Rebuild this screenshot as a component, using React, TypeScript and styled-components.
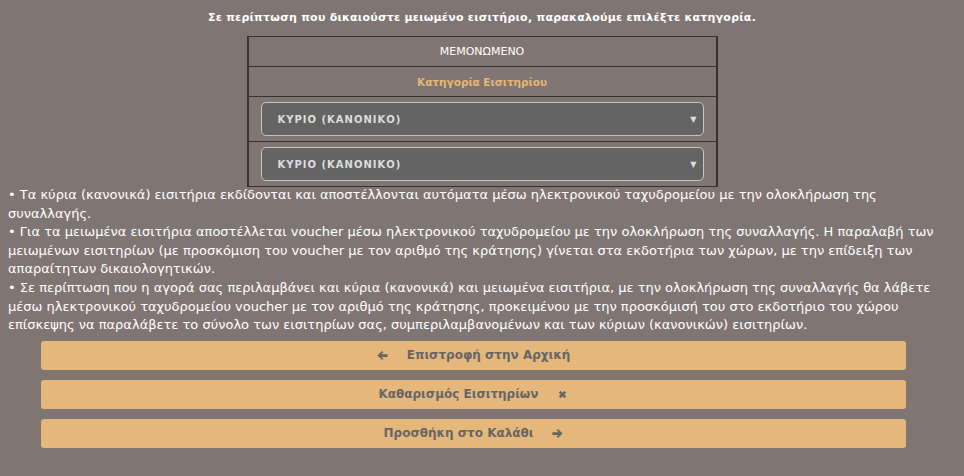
import React from 'react';
import styled, { createGlobalStyle } from 'styled-components';

const GlobalStyle = createGlobalStyle`
  html, body {
    margin: 0;
    padding: 0;
    background: #7f7674;
  }
  body {
    padding: 8px;
    font-family: 'DejaVu Sans', Verdana, sans-serif;
    color: #fff;
  }
`;

/** επιλογή μειωμένου εισιτηρίου */
const App = () => {
  return (
    <>
      <GlobalStyle />
      <Page>
        <Title>Σε περίπτωση που δικαιούστε μειωμένο εισιτήριο, παρακαλούμε επιλέξτε κατηγορία.</Title>
        <TicketTable>
          <tbody>
            <tr>
              <HeadCell>ΜΕΜΟΝΩΜΕΝΟ</HeadCell>
            </tr>
            <tr>
              <HeadCell $accent>Κατηγορία Εισιτηρίου</HeadCell>
            </tr>
            <tr>
              <SelectCell>
                <SelectBox>
                  <span>ΚΥΡΙΟ (ΚΑΝΟΝΙΚΟ)</span>
                  <Caret>▼</Caret>
                </SelectBox>
              </SelectCell>
            </tr>
            <tr>
              <SelectCell>
                <SelectBox>
                  <span>ΚΥΡΙΟ (ΚΑΝΟΝΙΚΟ)</span>
                  <Caret>▼</Caret>
                </SelectBox>
              </SelectCell>
            </tr>
          </tbody>
        </TicketTable>
        <Notes>
          <p>
            • Τα κύρια (κανονικά) εισιτήρια εκδίδονται και αποστέλλονται αυτόματα μέσω ηλεκτρονικού
            ταχυδρομείου με την ολοκλήρωση της συναλλαγής.
          </p>
          <p>
            • Για τα μειωμένα εισιτήρια αποστέλλεται voucher μέσω ηλεκτρονικού ταχυδρομείου με την
            ολοκλήρωση της συναλλαγής. Η παραλαβή των μειωμένων εισιτηρίων (με προσκόμιση του voucher
            με τον αριθμό της κράτησης) γίνεται στα εκδοτήρια των χώρων, με την επίδειξη των
            απαραίτητων δικαιολογητικών.
          </p>
          <p>
            • Σε περίπτωση που η αγορά σας περιλαμβάνει και κύρια (κανονικά) και μειωμένα εισιτήρια, με
            την ολοκλήρωση της συναλλαγής θα λάβετε μέσω ηλεκτρονικού ταχυδρομείου voucher με τον
            αριθμό της κράτησης, προκειμένου με την προσκόμισή του στο εκδοτήριο του χώρου επίσκεψης
            να παραλάβετε το σύνολο των εισιτηρίων σας, συμπεριλαμβανομένων και των κύριων
            (κανονικών) εισιτηρίων.
          </p>
        </Notes>
        <Actions>
          <ActionButton>
            <Icon viewBox='0 0 12 12'>
              <path d='M0.5 6 L5.5 1 L7 2.5 L4.8 4.5 H11.5 V7.5 H4.8 L7 9.5 L5.5 11 Z' />
            </Icon>
            Επιστροφή στην Αρχική
          </ActionButton>
          <ActionButton>
            Καθαρισμός Εισιτηρίων
            <Icon viewBox='0 0 12 12'>
              <path d='M2 4 L4 2 L6 4 L8 2 L10 4 L8 6 L10 8 L8 10 L6 8 L4 10 L2 8 L4 6 Z' />
            </Icon>
          </ActionButton>
          <ActionButton>
            Προσθήκη στο Καλάθι
            <Icon viewBox='0 0 12 12'>
              <path d='M11.5 6 L6.5 1 L5 2.5 L7.2 4.5 H0.5 V7.5 H7.2 L5 9.5 L6.5 11 Z' />
            </Icon>
          </ActionButton>
        </Actions>
      </Page>
    </>
  );
};
export default App;

const Page = styled.div`
  width: 948px;
  display: flex;
  flex-direction: column;
`;

const Title = styled.h3`
  margin: 3px 0 0;
  font-size: 11px;
  font-weight: bold;
  line-height: 14px;
  letter-spacing: 0.25px;
  text-align: center;
`;

const TicketTable = styled.table`
  width: 471px;
  margin: 11px auto 0;
  border-collapse: collapse;
`;

const HeadCell = styled.td<{ $accent?: boolean }>`
  height: 29px;
  padding: 0;
  border: 2px solid #333;
  border-width: 1px 2px;
  text-align: center;
  font-size: ${({ $accent }) => ($accent ? '10.5px' : '11px')};
  font-weight: ${({ $accent }) => ($accent ? 'bold' : 'normal')};
  color: ${({ $accent }) => ($accent ? '#e8b672' : '#fff')};
`;

const SelectCell = styled.td`
  padding: 5px 12px;
  border: 2px solid #333;
  border-width: 1px 2px;
`;

const SelectBox = styled.div`
  height: 32px;
  display: flex;
  align-items: center;
  justify-content: space-between;
  padding: 0 6px 0 16px;
  background: #646464;
  border: 1px solid #c4c4c4;
  border-radius: 5px;
  color: #ddd;
  font-size: 10px;
  font-weight: bold;
  letter-spacing: 1px;
`;

const Caret = styled.span`
  font-size: 8px;
  color: #ddd;
  letter-spacing: 0;
`;

const Notes = styled.div`
  margin-top: -1px;
  font-size: 13px;
  line-height: 18.6px;

  p {
    margin: 0;
  }
`;

const Actions = styled.div`
  width: 865px;
  margin: 6px 0 0 33px;
  display: flex;
  flex-direction: column;
  gap: 10px;
`;

const ActionButton = styled.button`
  height: 29px;
  display: flex;
  align-items: center;
  justify-content: center;
  gap: 19px;
  padding: 0;
  border: none;
  border-radius: 3px;
  background: #e5b77b;
  color: #666;
  font-family: 'DejaVu Sans', Verdana, sans-serif;
  font-size: 12px;
  font-weight: bold;
  cursor: pointer;
`;

const Icon = styled.svg`
  width: 11px;
  height: 11px;
  fill: #666;
`;
